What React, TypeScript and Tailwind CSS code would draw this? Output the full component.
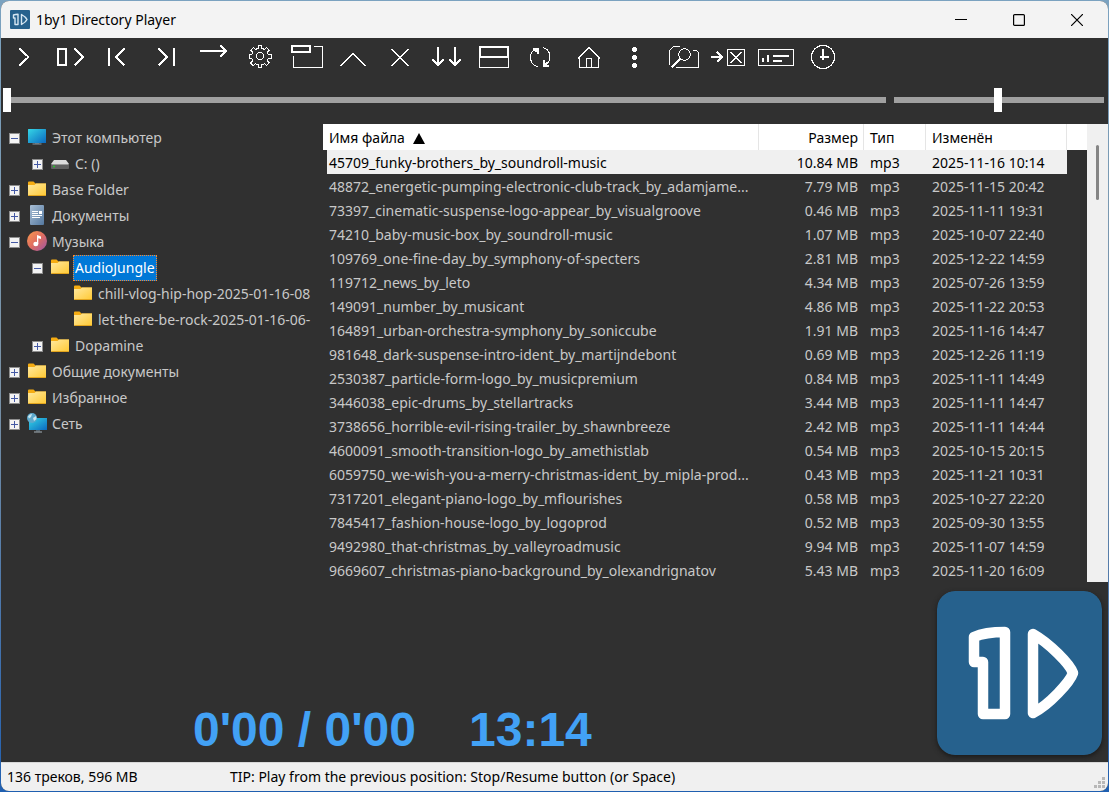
import React, { useState } from "react";

type TreeItem = {
    label: string;
    depth: 0 | 1 | 2;
    icon: "pc" | "drive" | "folder" | "docs" | "music" | "net";
    state?: "open" | "closed";
};

const tree: TreeItem[] = [
    { label: "Этот компьютер", depth: 0, icon: "pc", state: "open" },
    { label: "C: ()", depth: 1, icon: "drive", state: "closed" },
    { label: "Base Folder", depth: 0, icon: "folder", state: "closed" },
    { label: "Документы", depth: 0, icon: "docs", state: "closed" },
    { label: "Музыка", depth: 0, icon: "music", state: "open" },
    { label: "AudioJungle", depth: 1, icon: "folder", state: "open" },
    { label: "chill-vlog-hip-hop-2025-01-16-08", depth: 2, icon: "folder" },
    { label: "let-there-be-rock-2025-01-16-06-", depth: 2, icon: "folder" },
    { label: "Dopamine", depth: 1, icon: "folder", state: "closed" },
    { label: "Общие документы", depth: 0, icon: "folder", state: "closed" },
    { label: "Избранное", depth: 0, icon: "folder", state: "closed" },
    { label: "Сеть", depth: 0, icon: "net", state: "closed" },
];

const files = [
    { name: "45709_funky-brothers_by_soundroll-music", size: "10.84 MB", date: "2025-11-16 10:14" },
    { name: "48872_energetic-pumping-electronic-club-track_by_adamjame...", size: "7.79 MB", date: "2025-11-15 20:42" },
    { name: "73397_cinematic-suspense-logo-appear_by_visualgroove", size: "0.46 MB", date: "2025-11-11 19:31" },
    { name: "74210_baby-music-box_by_soundroll-music", size: "1.07 MB", date: "2025-10-07 22:40" },
    { name: "109769_one-fine-day_by_symphony-of-specters", size: "2.81 MB", date: "2025-12-22 14:59" },
    { name: "119712_news_by_leto", size: "4.34 MB", date: "2025-07-26 13:59" },
    { name: "149091_number_by_musicant", size: "4.86 MB", date: "2025-11-22 20:53" },
    { name: "164891_urban-orchestra-symphony_by_soniccube", size: "1.91 MB", date: "2025-11-16 14:47" },
    { name: "981648_dark-suspense-intro-ident_by_martijndebont", size: "0.69 MB", date: "2025-12-26 11:19" },
    { name: "2530387_particle-form-logo_by_musicpremium", size: "0.84 MB", date: "2025-11-11 14:49" },
    { name: "3446038_epic-drums_by_stellartracks", size: "3.44 MB", date: "2025-11-11 14:47" },
    { name: "3738656_horrible-evil-rising-trailer_by_shawnbreeze", size: "2.42 MB", date: "2025-11-11 14:44" },
    { name: "4600091_smooth-transition-logo_by_amethistlab", size: "0.54 MB", date: "2025-10-15 20:15" },
    { name: "6059750_we-wish-you-a-merry-christmas-ident_by_mipla-prod...", size: "0.43 MB", date: "2025-11-21 10:31" },
    { name: "7317201_elegant-piano-logo_by_mflourishes", size: "0.58 MB", date: "2025-10-27 22:20" },
    { name: "7845417_fashion-house-logo_by_logoprod", size: "0.52 MB", date: "2025-09-30 13:55" },
    { name: "9492980_that-christmas_by_valleyroadmusic", size: "9.94 MB", date: "2025-11-07 14:59" },
    { name: "9669607_christmas-piano-background_by_olexandrignatov", size: "5.43 MB", date: "2025-11-20 16:09" },
];

// every glyph is drawn on the full 47x40 button face
const tools: { title: string; art: React.ReactNode }[] = [
    { title: "Play", art: <path d="M18.5 10.5 27.5 19l-9 8.5" strokeWidth="2" /> },
    { title: "Stop / Resume", art: <path d="M10 11h8v16h-8zM26.5 10.5 35 19l-8.5 8.5" strokeWidth="2" /> },
    { title: "Previous", art: <path d="M14 10v18M29.5 10.5 21 19l8.5 8.5" strokeWidth="2" /> },
    { title: "Next", art: <path d="M32 10v18M16.5 10.5 25 19l-8.5 8.5" strokeWidth="2" /> },
    { title: "Play order", art: <path d="M11 13h26M31.5 7.5 37.5 13l-6 5.5" strokeWidth="2" /> },
    {
        title: "Settings",
        art: (
            <>
                <circle cx="24" cy="18" r="3.8" />
                <path d="M22.3 7.5h3.4v2.8l3 1.2 2-2 2.6 2.6-2 2 1.2 2.7h2.5v3.4h-2.5l-1.2 2.8 2 2-2.6 2.6-2-2-3 1.2v2.2h-3.4v-2.2l-3-1.2-2 2-2.6-2.6 2-2-1.2-2.8h-2v-3.4h2l1.2-2.7-2-2 2.6-2.6 2 2 3-1.2z" />
            </>
        ),
    },
    {
        title: "Window view",
        art: (
            <>
                <path d="M9 8h18v6H9z" strokeWidth="2" />
                <path d="M31 8.5h8.5v21h-29V18" />
            </>
        ),
    },
    { title: "Up", art: <path d="M10.5 28 23 15.5 35.5 28" strokeWidth="1.3" /> },
    { title: "Delete", art: <path d="M14.5 11l17 17M31.5 11l-17 17" strokeWidth="1.3" /> },
    {
        title: "Scroll down",
        art: <path d="M14 9v17M8.5 21.5 14 27l5.5-5.5M31 9v17M25.5 21.5 31 27l5.5-5.5" strokeWidth="2" />,
    },
    {
        title: "Split view",
        art: (
            <>
                <path d="M9 9h28v10H9z" strokeWidth="2" />
                <path d="M8.5 20v9.5h29V20" />
            </>
        ),
    },
    {
        title: "Refresh",
        art: (
            <>
                <path d="M16.5 12a9 9 0 0 0 4 16.5M25 9.500a9.500 9.500 0 0 1 2 17.500" />
                <path d="M15 11h5v5M31 28h-5v-6M20 11l-3 3M26 28l3-3" strokeWidth="1.6" />
            </>
        ),
    },
    {
        title: "Home",
        art: <path d="M13 20.5 24 9.5l11 11M14.5 19v10.5h19V19M21.5 29v-8.5h5V29" />,
    },
    {
        title: "More",
        art: (
            <g fill="white" stroke="none">
                <circle cx="22.5" cy="11.5" r="2.6" />
                <circle cx="22.5" cy="19.5" r="2.6" />
                <circle cx="22.5" cy="27.5" r="2.6" />
            </g>
        ),
    },
    {
        title: "Find file",
        art: (
            <>
                <path d="M10.5 27V12.5l4-4h6M33.5 12.5h4l2 2v15H17" />
                <circle cx="25.5" cy="16.5" r="5.8" />
                <path d="M21 21l-8.5 8.5" strokeWidth="2.5" />
            </>
        ),
    },
    {
        title: "Move to",
        art: (
            <>
                <path d="M5 19h11M11 14l5 5-5 5" strokeWidth="2" />
                <path d="M21.5 11.5h17v16h-17zM24.5 14l11 11M35.5 14l-11 11" strokeWidth="1.2" />
            </>
        ),
    },
    {
        title: "Sound info",
        art: (
            <>
                <path d="M5.5 11.5h35v16h-35z" />
                <path d="M10 20v4M15 17v7M20 18h16M20 23h9" strokeWidth="2" />
            </>
        ),
    },
    {
        title: "Timer",
        art: (
            <>
                <circle cx="23" cy="19" r="11.5" strokeWidth="1.2" />
                <path d="M23 11v11M20 19h9" strokeWidth="2" />
            </>
        ),
    },
];

const indent = ["pl-2", "pl-[31px]", "pl-[54px]"];

const AppLogo = ({ className }: { className: string }) => (
    <svg viewBox="0 0 165 164" className={className} aria-hidden="true">
        <rect width="165" height="164" rx="18" fill="#26618d" />
        <g fill="none" stroke="white" strokeWidth="10.5" strokeLinejoin="round" strokeLinecap="round">
            <path d="M37 46q11-5 31-5v82H46V71h-9z" />
            <path d="M96 43c16 9 37 30 40 39-3 9-24 32-40 40z" />
        </g>
    </svg>
);

// title bar version, glyphs fill more of the tile
const AppIcon = () => (
    <svg viewBox="0 0 20 19" className="h-[19px] w-5" aria-hidden="true">
        <rect width="20" height="19" rx="1" fill="#26618d" />
        <g fill="none" stroke="#d5e6f2" strokeWidth="1.4" strokeLinejoin="round">
            <path d="M3.5 5q2-.8 4.500-.8v10.300H5V8H3.500z" />
            <path d="M11.500 4.500q4.500 2.500 5.500 5-1 2.500-5.500 5z" />
        </g>
    </svg>
);

const TreeIcon = ({ kind }: { kind: TreeItem["icon"] }) => (
    <svg viewBox="0 0 20 20" className="mb-0.5 size-5 shrink-0" aria-hidden="true">
        <defs>
            <linearGradient id="folderFill" x1="0" y1="0" x2="1" y2="1">
                <stop offset="0" stopColor="#ffe9a0" />
                <stop offset="1" stopColor="#ffc933" />
            </linearGradient>
            <linearGradient id="screenFill" x1="0" y1="0" x2="1" y2="1">
                <stop offset="0" stopColor="#35d6e6" />
                <stop offset="1" stopColor="#0b68c0" />
            </linearGradient>
            <linearGradient id="docFill" x1="0" y1="0" x2="1" y2="1">
                <stop offset="0" stopColor="#a9bfd6" />
                <stop offset="1" stopColor="#54789f" />
            </linearGradient>
            <linearGradient id="musicFill" x1="0" y1="0" x2="1" y2="1">
                <stop offset="0" stopColor="#fb9a4c" />
                <stop offset="0.5" stopColor="#df6d62" />
                <stop offset="1" stopColor="#9a55a8" />
            </linearGradient>
        </defs>
        {kind === "folder" && (
            <>
                <path d="M1 3.500q0-1 1-1h4.500l2 2H19v5H1z" fill="#f5ac12" />
                <path d="M1 6h6.500L9 4.500h10V16q0 1-1 1H2q-1 0-1-1z" fill="url(#folderFill)" />
                <path d="M1.500 16.500h17" stroke="#e2a41d" />
            </>
        )}
        {kind === "pc" && (
            <>
                <path d="M8 15h4v2H8z" fill="#52616b" />
                <path d="M5.500 17h9" stroke="#8b98a1" />
                <rect x="1" y="2" width="18" height="14" rx="0.5" fill="url(#screenFill)" />
            </>
        )}
        {kind === "drive" && (
            <>
                <path d="M4 7h12l3 4H1z" fill="#dcdcdc" />
                <rect x="1" y="11" width="18" height="5" rx="1" fill="#606060" />
                <path d="M1.500 11.500h17" stroke="#999" />
                <path d="M3 13.500h2" stroke="#26c52b" strokeWidth="1.5" />
            </>
        )}
        {kind === "docs" && (
            <>
                <rect x="3" width="14" height="20" rx="1" fill="url(#docFill)" />
                <path d="M5 6.500h6M5 8.500h6M5 10.500h10M5 12.500h8" stroke="white" />
                <path d="M12 6h3v3h-3z" fill="white" />
            </>
        )}
        {kind === "music" && (
            <>
                <circle cx="10" cy="10" r="10" fill="url(#musicFill)" />
                <ellipse cx="8.8" cy="13" rx="2.5" ry="2.2" fill="white" />
                <path d="M10 4l4 1.500v2.500l-2.700-.8V13H10z" fill="white" />
            </>
        )}
        {kind === "net" && (
            <>
                <path d="M9 16h4v2.500H9z" fill="#52616b" />
                <path d="M7 19h8" stroke="#a4b0b8" />
                <path d="M2 5h18v12H2z" fill="url(#screenFill)" />
                <circle cx="5" cy="5" r="5" fill="#5ea9cc" />
                <path d="M1 3.500q2-3 4-2.500L4 4 2 5.500zM6 5l3-2 .5 3-2.500 2z" fill="#c9e7f0" />
            </>
        )}
    </svg>
);

const Expander = ({ state }: { state: "open" | "closed" }) => (
    <button aria-label={state === "open" ? "Свернуть" : "Развернуть"} className="size-[11px] shrink-0">
        <svg viewBox="0 0 11 11" className="block size-[11px]" shapeRendering="crispEdges">
            <rect x="0.5" y="0.5" width="10" height="10" fill="#f3f3f3" stroke="#8e8e8e" />
            <path d="M2 5.500h7" stroke="#4459a5" />
            {state === "closed" && <path d="M5.500 2v7" stroke="#4459a5" />}
        </svg>
    </button>
);

const sliderClass =
    "h-6 min-w-0 appearance-none bg-transparent [&::-webkit-slider-runnable-track]:h-1.5 [&::-webkit-slider-runnable-track]:bg-[#a0a0a0] [&::-webkit-slider-thumb]:-mt-[9px] [&::-webkit-slider-thumb]:h-6 [&::-webkit-slider-thumb]:w-2 [&::-webkit-slider-thumb]:appearance-none [&::-webkit-slider-thumb]:bg-white";

const App = () => {
    const [folder, setFolder] = useState("AudioJungle");
    const [track, setTrack] = useState(0);

    return (
        <div className="flex min-h-screen flex-col bg-linear-to-b from-[#7ba2c0] via-[#7890a4] to-[#1f5fb0] p-px font-['Noto_Sans','Open_Sans',sans-serif] text-sm">
            <main className="flex flex-1 flex-col overflow-hidden rounded-lg bg-[#303030] text-[#c8c8c8]">
                {/* Title bar */}
                <header className="flex h-[37px] shrink-0 items-center bg-[#f3f3f3] pr-0.5 pl-[9px] text-black">
                    <AppIcon />
                    <h1 className="flex-1 pl-1.5">1by1 Directory Player</h1>
                    <button aria-label="Minimize" className="flex h-full w-[58px] items-center justify-center">
                        <svg viewBox="0 0 12 12" className="size-3" stroke="black"><path d="M0 5.500h12" /></svg>
                    </button>
                    <button aria-label="Maximize" className="flex h-full w-[58px] items-center justify-center">
                        <svg viewBox="0 0 12 12" className="size-3" fill="none" stroke="black" strokeWidth="1.2"><rect x="0.6" y="0.6" width="10.8" height="10.8" rx="1" /></svg>
                    </button>
                    <button aria-label="Close" className="flex h-full w-[58px] items-center justify-center">
                        <svg viewBox="0 0 12 12" className="size-3" stroke="black" strokeWidth="1.2"><path d="M0 0l12 12M12 0 0 12" /></svg>
                    </button>
                </header>

                {/* Toolbar */}
                <nav className="flex h-10 shrink-0">
                    {tools.map((tool) => (
                        <button key={tool.title} aria-label={tool.title} className="w-[47px] shrink-0">
                            <svg viewBox="0 0 47 40" className="block h-10 w-[47px]" fill="none" stroke="white" shapeRendering="crispEdges">
                                {tool.art}
                            </svg>
                        </button>
                    ))}
                </nav>

                {/* Position + volume */}
                <div className="flex h-[46px] shrink-0 items-center gap-2 pr-1 pb-0.5 pl-0.5">
                    <input type="range" aria-label="Position" defaultValue={0} className={`flex-1 ${sliderClass}`} />
                    <input type="range" aria-label="Volume" max={200} defaultValue={99} className={`w-[210px] ${sliderClass}`} />
                </div>

                <div className="flex">
                    {/* Folder tree */}
                    <ul className="w-[322px] shrink-0 overflow-hidden pt-px pr-1">
                        {tree.map((item) => (
                            <li key={item.label} className={`flex h-[26px] items-center overflow-hidden ${indent[item.depth]}`}>
                                {item.state ? <Expander state={item.state} /> : <span className="w-[11px] shrink-0" />}
                                <span className="w-[7px] shrink-0" />
                                <TreeIcon kind={item.icon} />
                                <button
                                    onClick={() => setFolder(item.label)}
                                    className={`ml-[3px] h-full px-0.5 whitespace-nowrap ${folder === item.label ? "bg-[#0078d7] text-white outline-1 -outline-offset-1 outline-dotted outline-[#ff8728]" : ""}`}
                                >
                                    {item.label}
                                </button>
                            </li>
                        ))}
                    </ul>

                    {/* File list */}
                    <div className="min-w-0 flex-1">
                        <table className="w-full table-fixed border-separate border-spacing-0 whitespace-nowrap">
                            <colgroup>
                                <col />
                                <col className="w-[105px]" />
                                <col className="w-[62px]" />
                                <col className="w-[141px]" />
                                <col className="w-5" />
                            </colgroup>
                            <thead>
                                <tr className="h-[26px] bg-white text-left text-black">
                                    <th className="border-r border-[#e5e5e5] p-0 pt-0.5 pl-1.5 font-normal">
                                        <span className="flex items-center gap-2">
                                            Имя файла
                                            <svg viewBox="0 0 12 11" className="h-[11px] w-3" aria-hidden="true"><path d="M6 0l6 11H0z" /></svg>
                                        </span>
                                    </th>
                                    <th className="border-r border-[#e5e5e5] p-0 pt-0.5 pr-[5px] text-right font-normal">Размер</th>
                                    <th className="border-r border-[#e5e5e5] p-0 pt-0.5 pl-1.5 font-normal">Тип</th>
                                    <th className="border-r border-[#e5e5e5] p-0 pt-0.5 pl-1.5 font-normal">Изменён</th>
                                    <td className="p-0" />
                                </tr>
                            </thead>
                            <tbody>
                                {files.map((file, i) => {
                                    const bg = track === i ? "bg-[#f0f0f0]" : "";
                                    return (
                                        <tr key={file.name} onClick={() => setTrack(i)} className={`h-6 ${track === i ? "text-black" : ""}`}>
                                            <td className={`overflow-hidden border-l-4 border-transparent bg-clip-padding p-0 pt-0.5 pl-0.5 ${bg}`}>{file.name}</td>
                                            <td className={`p-0 pt-0.5 pr-1.5 text-right ${bg}`}>{file.size}</td>
                                            <td className={`p-0 pt-0.5 pl-1.5 ${bg}`}>mp3</td>
                                            <td className={`p-0 pt-0.5 pl-1.5 ${bg}`}>{file.date}</td>
                                            <td className="p-0" />
                                        </tr>
                                    );
                                })}
                            </tbody>
                        </table>
                    </div>
                    <div className="flex w-[21px] shrink-0 justify-center bg-[#f0f0f0] pt-[21px]">
                        <div className="h-[55px] w-[3px] rounded-full bg-[#858585]" />
                    </div>
                </div>

                {/* Time display */}
                <section className="flex flex-1 items-end justify-between pr-1.5 pb-[7px]">
                    <div className="flex gap-[53px] pb-px pl-48 font-['Liberation_Sans',Arial,sans-serif] text-5xl font-bold text-[#42a1f5]">
                        <span>0'00 / 0'00</span>
                        <time>13:14</time>
                    </div>
                    <AppLogo className="h-[164px] w-[165px] rounded-[18px] shadow-[0_2px_5px_#1a1a1a]" />
                </section>

                {/* Status bar */}
                <footer className="flex h-[29px] shrink-0 items-center border-t border-[#d8d8d8] bg-[#f0f0f0] pl-1.5 text-black">
                    <span className="w-[223px] shrink-0">136 треков, 596 MB</span>
                    <span className="flex-1">TIP: Play from the previous position: Stop/Resume button (or Space)</span>
                    <svg viewBox="0 0 12 12" className="mr-0.5 mb-0.5 size-3 self-end" fill="#b8b8b8" aria-hidden="true">
                        <path d="M8 0h3v3H8zM4 4h3v3H4zM8 4h3v3H8zM0 8h3v3H0zM4 8h3v3H4zM8 8h3v3H8z" />
                    </svg>
                </footer>
            </main>
        </div>
    );
};

export default App;
